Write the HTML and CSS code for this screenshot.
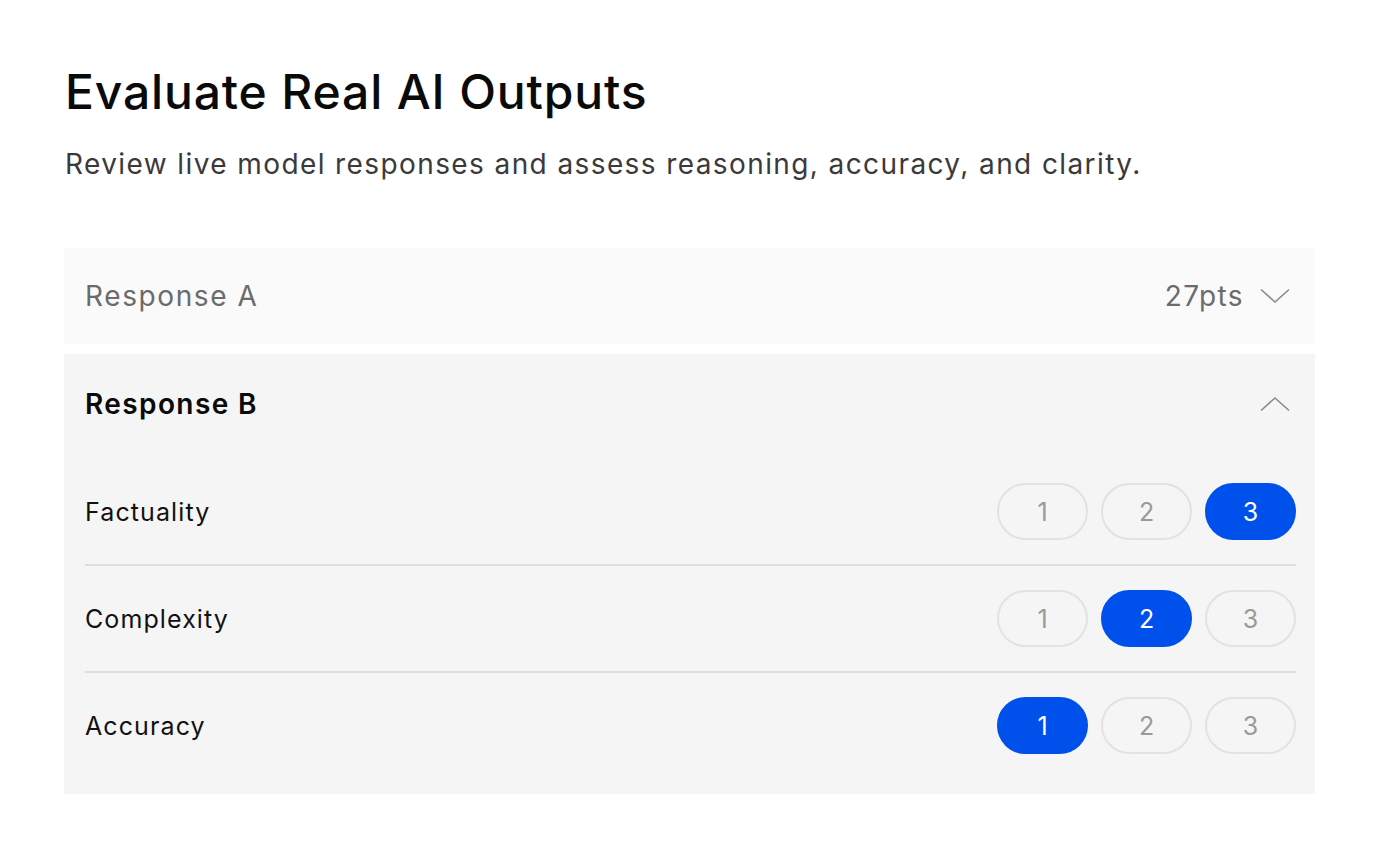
FILE: index.html
```html
<!DOCTYPE html>
<html lang="en">
<head>
    <meta charset="UTF-8">
    <meta name="viewport" content="width=device-width, initial-scale=1.0">
    <title>Evaluate Real AI Outputs</title>
    <link rel="stylesheet" href="styles.css">
</head>
<body>
    <div class="app">
        <h1 class="title">Evaluate Real AI Outputs</h1>
        <p class="subtitle">Review live model responses and assess reasoning, accuracy, and clarity.</p>

        <div class="responses">
            <div class="response">
                <div class="response-head">
                    <span class="response-name">Response A</span>
                    <span class="response-meta">
                        <span class="pts">27pts</span>
                        <svg class="chevron" width="30" height="16" viewBox="0 0 30 16"><path d="M1 1.5 L15 14 L29 1.5" fill="none" stroke="#8a8a8a" stroke-width="1.6"/></svg>
                    </span>
                </div>
            </div>

            <div class="response open">
                <div class="response-head">
                    <span class="response-name">Response B</span>
                    <span class="response-meta">
                        <svg class="chevron" width="30" height="16" viewBox="0 0 30 16"><path d="M1 14.5 L15 2 L29 14.5" fill="none" stroke="#8a8a8a" stroke-width="1.6"/></svg>
                    </span>
                </div>

                <ul class="criteria">
                    <li class="criterion">
                        <span class="criterion-name">Factuality</span>
                        <div class="scores">
                            <button class="score">1</button>
                            <button class="score">2</button>
                            <button class="score active">3</button>
                        </div>
                    </li>
                    <li class="criterion">
                        <span class="criterion-name">Complexity</span>
                        <div class="scores">
                            <button class="score">1</button>
                            <button class="score active">2</button>
                            <button class="score">3</button>
                        </div>
                    </li>
                    <li class="criterion">
                        <span class="criterion-name">Accuracy</span>
                        <div class="scores">
                            <button class="score active">1</button>
                            <button class="score">2</button>
                            <button class="score">3</button>
                        </div>
                    </li>
                </ul>
            </div>
        </div>
    </div>
</body>
</html>
```

FILE: styles.css
```css
* {
    padding: 0;
    margin: 0;
    box-sizing: border-box;
}

body {
    background: #fff;
    font-family: Inter, "Noto Sans", sans-serif;
    color: #111;
}

.app {
    padding: 64px 65px 0 64px;
}

.title {
    font-size: 48px;
    font-weight: 500;
    line-height: 56px;
    letter-spacing: 0.85px;
    color: #0a0a0a;
    padding-left: 1px;
}

.subtitle {
    margin-top: 26px;
    font-size: 28px;
    line-height: 36px;
    letter-spacing: 1.4px;
    color: #3a3a3a;
    padding-left: 1px;
}

.responses {
    margin-top: 66px;
    display: flex;
    flex-direction: column;
    gap: 10px;
}

.response {
    background: #fafafa;
}

.response.open {
    background: #f5f5f5;
    padding-bottom: 16px;
}

.response-head {
    display: flex;
    align-items: center;
    justify-content: space-between;
    height: 96px;
    padding: 0 25px 0 21px;
}

.response.open .response-head {
    height: 105px;
    padding-bottom: 5px;
}

.response-name {
    font-size: 28px;
    letter-spacing: 1.6px;
    color: #6b6b6b;
}

.response.open .response-name {
    font-weight: 600;
    letter-spacing: 1.4px;
    color: #0a0a0a;
}

.response-meta {
    display: flex;
    align-items: center;
    gap: 16px;
}

.pts {
    font-size: 28px;
    letter-spacing: 1.4px;
    color: #6b6b6b;
}

.criteria {
    list-style: none;
    padding: 0 19px 0 21px;
}

.criterion {
    display: flex;
    align-items: center;
    justify-content: space-between;
    padding: 24px 0;
    border-bottom: 2px solid #dedede;
}

.criterion:last-child {
    border-bottom: none;
}

.criterion-name {
    font-size: 25px;
    letter-spacing: 1.1px;
    color: #111;
}

.scores {
    display: flex;
    gap: 13px;
}

.score {
    width: 91px;
    height: 57px;
    border-radius: 29px;
    border: 2px solid #e2e2e2;
    background: transparent;
    font-family: Inter, "Noto Sans", sans-serif;
    font-size: 25px;
    color: #9a9a9a;
}

.score.active {
    background: #0050eb;
    border-color: #0050eb;
    color: #fff;
}
```
